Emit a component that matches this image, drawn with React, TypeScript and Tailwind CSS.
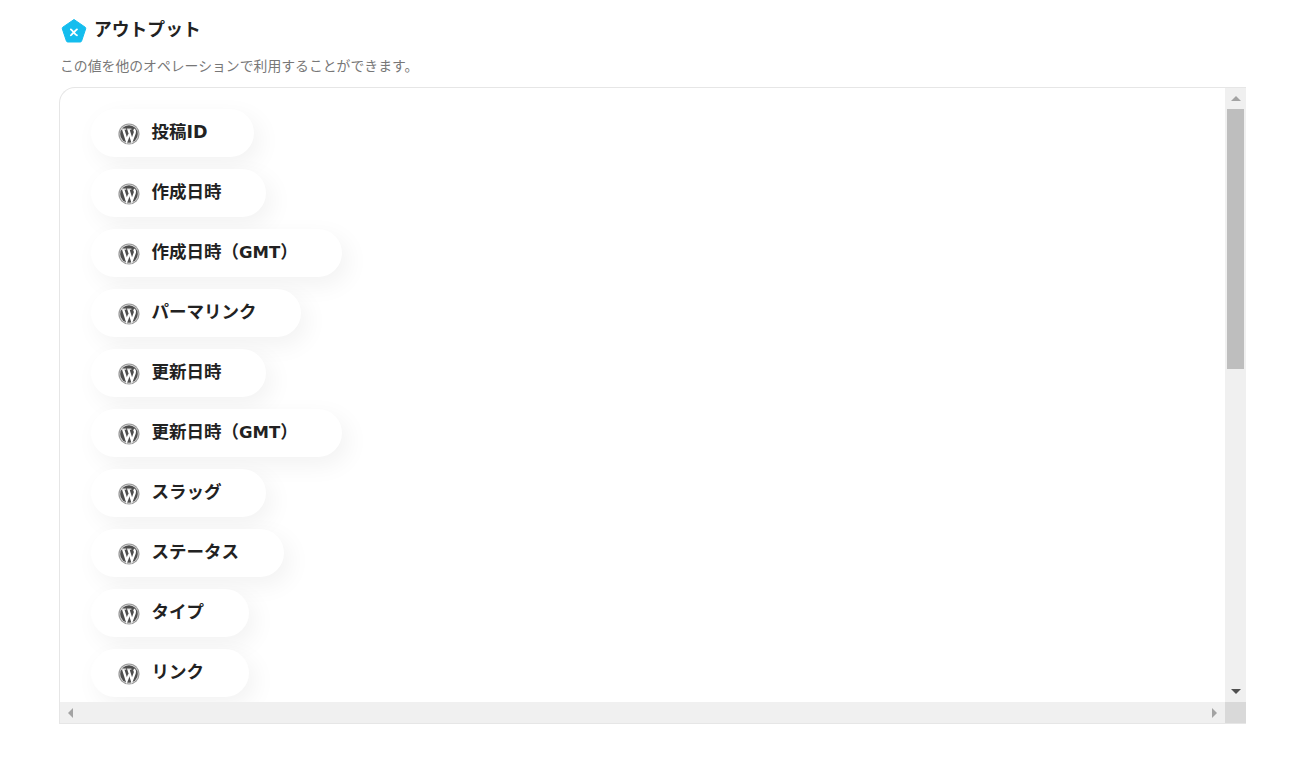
import type { ReactNode } from 'react'

const gmt = <span className="text-[16.5px]">GMT</span>

const items: { id: string; label: ReactNode; width: string }[] = [
  { id: 'post-id', label: '投稿ID', width: 'w-[163px]' },
  { id: 'created', label: '作成日時', width: 'w-[175px]' },
  { id: 'created-gmt', label: <>作成日時（{gmt}）</>, width: 'w-[251px]' },
  { id: 'permalink', label: 'パーマリンク', width: 'w-[210px]' },
  { id: 'updated', label: '更新日時', width: 'w-[175px]' },
  { id: 'updated-gmt', label: <>更新日時（{gmt}）</>, width: 'w-[251px]' },
  { id: 'slug', label: 'スラッグ', width: 'w-[175px]' },
  { id: 'status', label: 'ステータス', width: 'w-[193px]' },
  { id: 'type', label: 'タイプ', width: 'w-[158px]' },
  { id: 'link', label: 'リンク', width: 'w-[158px]' },
]

function WpIcon() {
  return (
    <svg className="w-[22px] h-[22px] mt-0.5 shrink-0" viewBox="0 0 22 22">
      <circle cx="11" cy="11" r="10.6" fill="#9a9a9a" />
      <circle cx="11" cy="11" r="9.4" fill="#e4e4e4" />
      <circle cx="11" cy="11" r="8.8" fill="#4f4f4f" />
      <g stroke="#ffffff" fill="none">
        <path d="M5.2 6.4 L8.7 17.6 L11.2 11.4" strokeWidth="2.3" />
        <path d="M10.4 6.4 L13.9 17.6 L16.7 10.2 Q17.4 8 16 6.2" strokeWidth="2.2" />
        <path d="M3.4 6.1 H8 M8.8 6.1 H13.4" strokeWidth="1" />
      </g>
    </svg>
  )
}

function Pill({ label, width }: { label: ReactNode; width: string }) {
  return (
    <div className={`${width} h-12 shrink-0 flex items-center pl-[27px] rounded-full bg-white shadow-[6px_8px_24px_rgba(0,0,0,0.055)]`}>
      <WpIcon />
      <span className="ml-[11.5px] text-[17.5px] -mt-0.5 font-bold whitespace-nowrap text-[#222222] font-['DejaVu_Sans','Noto_Sans_CJK_JP',sans-serif]">{label}</span>
    </div>
  )
}

export default function App() {
  return (
    <div className="w-[1298px] h-[770px] bg-white overflow-hidden pl-[59px] pt-[18px] font-['Liberation_Sans','Noto_Sans_CJK_JP',sans-serif]">
      <div className="flex items-center h-[27px]">
        <svg className="w-[26px] h-[26px] ml-0.5 -mt-px" viewBox="0 0 26 26">
          <path d="M13 1.5 L24.2 9.2 Q25 9.8 24.7 10.8 L20.6 23 Q20.2 24 19.2 24 L6.8 24 Q5.8 24 5.4 23 L1.3 10.8 Q1 9.8 1.8 9.2 Z" fill="#14bdee" stroke="#14bdee" strokeWidth="1" strokeLinejoin="round" />
          <path d="M9.8 11.4 C11.5 12 14 17 16 17.4 M16 11.4 C14.6 12 11 16.6 9.8 17.4" stroke="#ffffff" strokeWidth="1.7" strokeLinecap="round" fill="none" />
        </svg>
        <h2 className="ml-[7px] text-[17.8px] font-bold text-[#222222] -mt-[3px]">アウトプット</h2>
      </div>
      <p className="mt-3 ml-px text-[13.85px] leading-[18px] text-[#777777]">この値を他のオペレーションで利用することができます。</p>

      <div className="mt-3 w-[1187px] h-[637px] flex flex-col border-t border-l border-b border-[#e6e6e6] rounded-tl-2xl overflow-hidden">
        <div className="flex flex-1 min-h-0">
          <div className="flex-1 min-w-0 overflow-hidden pl-[31px] pt-[21px] flex flex-col gap-3">
            {items.map((item) => (
              <Pill key={item.id} label={item.label} width={item.width} />
            ))}
          </div>
          <div className="w-[21px] bg-[#f0f0f0] flex flex-col items-center">
            <div className="h-[21px] w-full flex items-center justify-center">
              <div className="w-0 h-0 border-x-[5px] border-x-transparent border-b-[5px] border-b-[#a3a3a3]" />
            </div>
            <div className="w-[17px] h-[260px] bg-[#bebebe]" />
            <div className="flex-1" />
            <div className="h-[21px] w-full flex items-center justify-center">
              <div className="w-0 h-0 border-x-[5px] border-x-transparent border-t-[5px] border-t-[#505050]" />
            </div>
          </div>
        </div>
        <div className="h-[21px] flex bg-[#f0f0f0]">
          <div className="flex-1 flex items-center justify-between px-2">
            <div className="w-0 h-0 border-y-[5px] border-y-transparent border-r-[5px] border-r-[#a3a3a3]" />
            <div className="w-0 h-0 border-y-[5px] border-y-transparent border-l-[5px] border-l-[#a3a3a3]" />
          </div>
          <div className="w-[21px] bg-[#d9d9d9]" />
        </div>
      </div>
    </div>
  )
}
